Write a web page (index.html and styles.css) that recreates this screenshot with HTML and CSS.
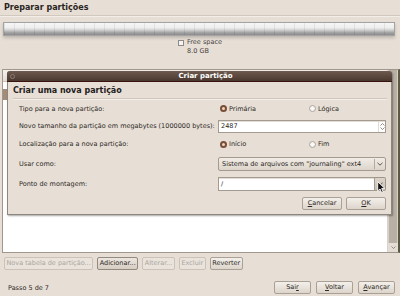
FILE: index.html
```html
<!DOCTYPE html>
<html lang="pt">
<head>
<meta charset="utf-8">
<title>Preparar partições</title>
<link rel="stylesheet" href="styles.css">
</head>
<body>
<div class="win">
  <div class="page-title">Preparar partições</div>
  <div class="rule"></div>
  <div class="bar"></div>
  <div class="legend">
    <div class="legend-item">
      <span class="chk"></span>
      <div class="legend-text">
        <div>Free space</div>
        <div>8.0 GB</div>
      </div>
    </div>
  </div>
  <div class="scrolled">
    <div class="tree">
      <div class="tree-head"></div>
      <div class="tree-sel"></div>
    </div>
    <div class="vscroll">
      <div class="trough"></div>
      <div class="stepper">
        <svg width="5" height="3" viewBox="0 0 5 3"><polyline points="0.5,0.5 2.5,2.5 4.5,0.5" fill="none" stroke="#8a8178" stroke-width="0.9"/></svg>
      </div>
    </div>
  </div>
  <div class="actions">
    <button class="btn disabled">Nova tabela de partição...</button>
    <button class="btn hover">Adicionar...</button>
    <button class="btn disabled">Alterar...</button>
    <button class="btn disabled">Excluir</button>
    <button class="btn">Reverter</button>
  </div>
  <div class="footer">
    <span class="step">Passo 5 de 7</span>
    <div class="nav">
      <button class="btn nav-btn">Sai<u>r</u></button>
      <button class="btn nav-btn"><u>V</u>oltar</button>
      <button class="btn nav-btn"><u>A</u>vançar</button>
    </div>
  </div>
</div>

<div class="dialog">
  <div class="titlebar">
    <span class="close"></span>
    <span class="dlg-title">Criar partição</span>
  </div>
  <div class="dlg-body">
    <div class="heading">Criar uma nova partição</div>
    <div class="hsep"></div>
    <div class="form">
      <div class="label">Tipo para a nova partição:</div>
      <div class="radios">
        <label class="radio"><span class="dot on"></span>Primária</label>
        <label class="radio"><span class="dot"></span>Lógica</label>
      </div>

      <div class="label">Novo tamanho da partição em megabytes (1000000 bytes):</div>
      <div class="entry">
        <span class="entry-text">2487</span>
        <span class="spin">
          <svg width="5" height="3" viewBox="0 0 5 3"><polyline points="0.5,2.5 2.5,0.5 4.5,2.5" fill="none" stroke="#7a726a" stroke-width="0.8"/></svg>
          <svg width="5" height="3" viewBox="0 0 5 3"><polyline points="0.5,0.5 2.5,2.5 4.5,0.5" fill="none" stroke="#7a726a" stroke-width="0.8"/></svg>
        </span>
      </div>

      <div class="label">Localização para a nova partição:</div>
      <div class="radios">
        <label class="radio"><span class="dot on"></span>Início</label>
        <label class="radio"><span class="dot"></span>Fim</label>
      </div>

      <div class="label">Usar como:</div>
      <div class="combo">
        <span class="combo-text">Sistema de arquivos com "journaling" ext4</span>
        <span class="combo-sep"></span>
        <span class="combo-arrow">
          <svg width="6" height="4" viewBox="0 0 6 4"><polyline points="0.5,0.8 3,3.2 5.5,0.8" fill="none" stroke="#4d4640" stroke-width="0.9"/></svg>
        </span>
      </div>

      <div class="label">Ponto de montagem:</div>
      <div class="entry-combo">
        <span class="entry ec-entry"><span class="entry-text">/</span></span>
        <span class="ec-btn">
          <svg width="6" height="4" viewBox="0 0 6 4"><polyline points="0.5,0.8 3,3.2 5.5,0.8" fill="none" stroke="#4d4640" stroke-width="0.9"/></svg>
        </span>
      </div>
    </div>
    <div class="dlg-buttons">
      <button class="btn dlg-btn"><u>C</u>ancelar</button>
      <button class="btn dlg-btn"><u>O</u>K</button>
    </div>
  </div>
</div>

<svg class="cursor" width="10" height="13" viewBox="0 0 10 13">
  <path d="M0.7 0.7 L0.7 10 L3 8 L4.6 11.6 L6.2 10.9 L4.7 7.4 L7.8 7.4 Z" fill="#111" stroke="#fff" stroke-width="0.9" stroke-linejoin="round"/>
</svg>
</body>
</html>
```

FILE: styles.css
```css
* { box-sizing: border-box; }
html, body { margin: 0; padding: 0; }
body {
  width: 400px;
  height: 296px;
  overflow: hidden;
  position: relative;
  background: #e7dfd6;
  font-family: "DejaVu Sans", sans-serif;
  font-size: 6.5px;
  color: #2d2925;
}

.win {
  display: flex;
  flex-direction: column;
  height: 296px;
}

.page-title {
  font-weight: bold;
  font-size: 8px;
  line-height: 10px;
  padding: 3px 0 0 4px;
  color: #2a2521;
}

.rule {
  margin-top: 2px;
  height: 2px;
  border-top: 1px solid #d2c9be;
  border-bottom: 1px solid #f2ede8;
}

.bar {
  margin: 5px 5px 0 3px;
  height: 14px;
  border: 1px solid #a3a3a3;
  background:
    linear-gradient(90deg, transparent 9px, rgba(0, 0, 0, 0.07) 9px) 1px 0 / 10px 100% repeat-x,
    linear-gradient(#f6f6f6 0%, #eeeeee 40%, #d2d2d2 58%, #a3a3a3 80%, #8c8c8c 100%);
  box-shadow: 0 2px 3px rgba(0, 0, 0, 0.18);
}

.legend {
  display: flex;
  justify-content: center;
  margin-top: 2px;
  line-height: 9px;
  color: #46413c;
}
.legend-item {
  display: flex;
  gap: 3px;
}
.chk {
  width: 6px;
  height: 6px;
  margin-top: 2px;
  border: 1px solid #8f8a85;
  background: #f6f4f1;
}

.scrolled {
  margin: 13px 0 0 2px;
  height: 184px;
  display: flex;
  border: 1px solid #a0978c;
  border-right: 2px solid #5d5841;
}
.tree {
  flex: 1;
  background: #fff;
}
.tree-head {
  height: 12px;
  background: linear-gradient(#f5f2ee, #e4ddd5);
  border-bottom: 1px solid #c9c1b7;
}
.tree-sel {
  margin-top: 7px;
  height: 11px;
  background: #a38d79;
}
.vscroll {
  width: 11px;
  display: flex;
  flex-direction: column;
  border-left: 1px solid #d9d2ca;
  background: #d8d0c7;
}
.trough {
  flex: 1;
  margin: 0 1px;
  background: #b9b0a5;
}
.stepper {
  height: 9px;
  display: flex;
  align-items: center;
  justify-content: center;
  background: #e4ddd5;
}
.stepper svg { display: block; }

.btn {
  height: 13px;
  padding: 0 1.5px;
  border: 1px solid #a9a096;
  border-radius: 2px;
  background: linear-gradient(#f3efea, #ddd5cb);
  font-family: inherit;
  font-size: 6.5px;
  line-height: 11px;
  color: #2d2925;
  white-space: nowrap;
}
.btn u { text-decoration-thickness: 0.6px; text-underline-offset: 1px; }
.btn.disabled {
  color: #aca59c;
  border-color: #cbc3b9;
  background: #e9e3dc;
}
.btn.hover {
  border-color: #928a80;
  background: linear-gradient(#ece6df, #d6cdc2);
}

.actions {
  display: flex;
  gap: 4px;
  margin-top: 4px;
  padding-left: 4px;
}

.footer {
  margin-top: 11px;
  display: flex;
  align-items: center;
  justify-content: space-between;
  padding: 0 5px 0 8px;
}
.step { color: #2d2925; }
.nav {
  display: flex;
  gap: 5px;
}
.nav-btn { min-width: 37px; }

/* dialog window */
.dialog {
  position: absolute;
  left: 7px;
  top: 71px;
  width: 385px;
  height: 144px;
  background: #e7dfd6;
  border: 1px solid #8f867c;
  border-top: none;
  border-radius: 3px 3px 0 0;
  box-shadow: 1px 1px 2px rgba(0, 0, 0, 0.35);
}
.titlebar {
  height: 11px;
  margin: 0 -1px;
  display: flex;
  align-items: center;
  padding-left: 3px;
  border-radius: 3px 3px 0 0;
  background: linear-gradient(#6e5a4e, #4a382f);
  border-bottom: 1px solid #3a1210;
  color: #fff;
}
.close {
  width: 5px;
  height: 5px;
  border-radius: 50%;
  border: 1px solid #8b7a6f;
  background: #5a473d;
}
.dlg-title {
  flex: 1;
  text-align: center;
  padding-left: 4px;
  font-weight: bold;
  font-size: 7px;
  line-height: 10px;
}
.dlg-body {
  padding: 4px 4px 0 5px;
}
.heading {
  font-weight: bold;
  font-size: 8px;
  line-height: 10px;
  color: #24201c;
}
.hsep {
  margin-top: 2px;
  height: 2px;
  border-top: 1px solid #d0c7bc;
  border-bottom: 1px solid #f3eee9;
}
.form {
  display: grid;
  grid-template-columns: 199px 1fr;
  grid-template-rows: 17px 18px 18px 21px 20px;
  padding: 0 1px 0 6px;
  align-items: center;
}
.label { color: #2d2925; white-space: nowrap; }

.radios {
  display: grid;
  grid-template-columns: 89px auto;
}
.radio {
  display: flex;
  align-items: center;
  gap: 2px;
  margin-left: 2px;
}
.dot {
  width: 7px;
  height: 7px;
  border-radius: 50%;
  border: 1px solid #b0a89f;
  background: radial-gradient(#ffffff, #eee9e3);
}
.dot.on {
  border: 2px solid #7a4e36;
  background: #efd6c4;
}

.entry {
  height: 13px;
  display: flex;
  align-items: center;
  border: 1px solid #a39a90;
  background: #fff;
  box-shadow: inset 0 1px 0 #e3ddd6;
}
.entry-text {
  flex: 1;
  padding-left: 2px;
  color: #2a2622;
}
.spin {
  width: 7px;
  height: 100%;
  display: flex;
  flex-direction: column;
  align-items: center;
  justify-content: center;
  gap: 1px;
  border-left: 1px solid #e0dad3;
}
.spin svg { display: block; }

.combo {
  height: 14px;
  display: flex;
  align-items: center;
  border: 1px solid #a39a90;
  border-radius: 2px;
  background: linear-gradient(#f1ece6, #ddd5cb);
}
.combo-text {
  flex: 1;
  padding-left: 3px;
  white-space: nowrap;
}
.combo-sep {
  width: 1px;
  height: 10px;
  background: #b3aaa0;
}
.combo-arrow {
  width: 10px;
  display: flex;
  justify-content: center;
}
.combo-arrow svg, .ec-btn svg { display: block; }

.entry-combo {
  height: 14px;
  display: flex;
}
.ec-entry {
  flex: 1;
  height: 14px;
}
.ec-btn {
  width: 11px;
  display: flex;
  align-items: center;
  justify-content: center;
  border: 1px solid #9d948a;
  border-left: none;
  border-radius: 0 2px 2px 0;
  background: linear-gradient(#ddd4ca, #c9bfb4);
}

.dlg-buttons {
  display: flex;
  justify-content: flex-end;
  gap: 4px;
  margin-top: 3px;
  padding-right: 1px;
}
.dlg-btn { min-width: 40px; }

.cursor {
  position: absolute;
  left: 377px;
  top: 181px;
}
```
